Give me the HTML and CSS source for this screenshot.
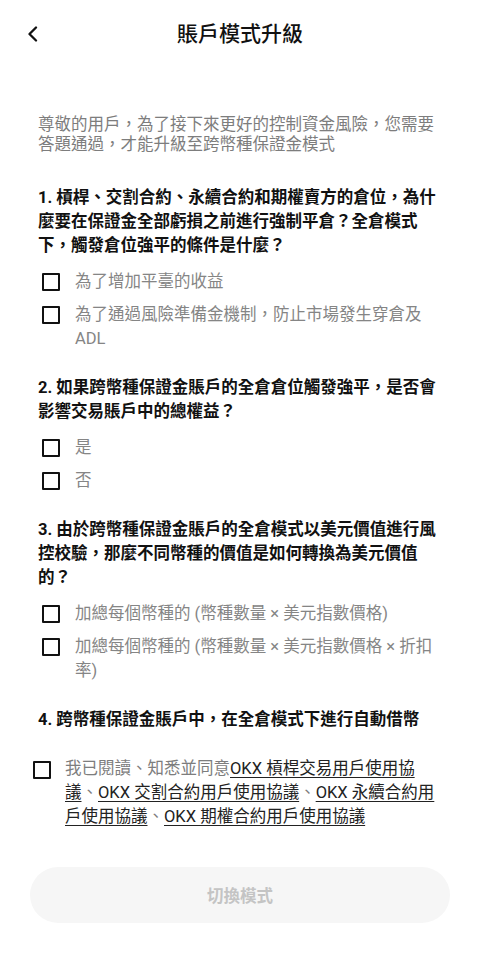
FILE: index.html
```html
<!DOCTYPE html>
<html lang="zh-Hant">
<head>
    <meta charset="UTF-8">
    <meta name="viewport" content="width=device-width, initial-scale=1.0">
    <title>賬戶模式升級</title>
    <link rel="stylesheet" href="styles.css">
</head>
<body>
    <div class="header">
        <button class="back" aria-label="返回">
            <svg width="12" height="16" viewBox="0 0 12 16"><polyline points="9,1.5 2.5,8 9,14.5" fill="none" stroke="#111" stroke-width="2.3" stroke-linecap="round" stroke-linejoin="round"/></svg>
        </button>
        <h1 class="title">賬戶模式升級</h1>
    </div>

    <div class="content">
        <p class="intro">尊敬的用戶，為了接下來更好的控制資金風險，您需要答題通過，才能升級至跨幣種保證金模式</p>

        <div class="quiz">
            <div class="question">
                <h2>1. 槓桿、交割合約、永續合約和期權賣方的倉位，為什麼要在保證金全部虧損之前進行強制平倉？全倉模式下，觸發倉位強平的條件是什麼？</h2>
                <label class="option"><span class="box"></span><span>為了增加平臺的收益</span></label>
                <label class="option"><span class="box"></span><span>為了通過風險準備金機制，防止市場發生穿倉及 ADL</span></label>
            </div>
            <div class="question">
                <h2>2. 如果跨幣種保證金賬戶的全倉倉位觸發強平，是否會影響交易賬戶中的總權益？</h2>
                <label class="option"><span class="box"></span><span>是</span></label>
                <label class="option"><span class="box"></span><span>否</span></label>
            </div>
            <div class="question">
                <h2>3. 由於跨幣種保證金賬戶的全倉模式以美元價值進行風控校驗，那麼不同幣種的價值是如何轉換為美元價值的？</h2>
                <label class="option"><span class="box"></span><span>加總每個幣種的 (幣種數量 × 美元指數價格)</span></label>
                <label class="option"><span class="box"></span><span>加總每個幣種的 (幣種數量 × 美元指數價格 × 折扣率)</span></label>
            </div>
            <div class="question">
                <h2>4. 跨幣種保證金賬戶中，在全倉模式下進行自動借幣</h2>
            </div>
        </div>
    </div>

    <label class="agree">
        <span class="box"></span>
        <span>我已閱讀、知悉並同意<a href="#">OKX 槓桿交易用戶使用協議</a>、<a href="#">OKX 交割合約用戶使用協議</a>、<a href="#">OKX 永續合約用戶使用協議</a>、<a href="#">OKX 期權合約用戶使用協議</a></span>
    </label>

    <div class="footer">
        <button class="switch" disabled>切換模式</button>
    </div>
</body>
</html>
```

FILE: styles.css
```css
*, *:before, *:after {box-sizing: border-box;}
* {margin: 0; padding: 0;}
html, body {background: #fff; color: #111; font-family: "Roboto", "Noto Sans CJK TC", sans-serif; font-size: 16.5px;}
button {font-family: inherit; border: none; background: none;}

.header {position: relative; height: 68px; display: flex; align-items: center; justify-content: center;}
.back {position: absolute; left: 26px; top: 26px; width: 14px; height: 16px; display: flex; align-items: center; justify-content: center; cursor: pointer;}
.title {font-size: 21px; font-weight: 500; color: #111; line-height: 1;}

.content {padding: 47px 38px 0;}
.intro {color: #7d7d7d; line-height: 20px;}

.quiz {display: flex; flex-direction: column; gap: 25px; margin-top: 31px;}
.question {display: flex; flex-direction: column; gap: 9px;}
.question h2 {font-size: 16.5px; font-weight: 700; line-height: 24px; margin-bottom: 3px; color: #111;}

.option {display: flex; gap: 15px; padding-left: 4px; color: #858585; line-height: 24px; cursor: pointer;}
.box {flex: none; width: 18px; height: 18px; margin-top: 3px; border: 2px solid #111; border-radius: 1px;}

.agree {display: flex; gap: 14px; padding: 0 37px 0 33px; margin-top: 22px; color: #7d7d7d; line-height: 24px; cursor: pointer;}
.agree .box {margin-top: 4px;}
.agree a {color: #222; text-decoration: underline; text-underline-offset: 3px; text-decoration-thickness: 1px;}

.footer {padding: 0 30px; margin-top: 38px;}
.switch {display: block; width: 100%; height: 56px; border-radius: 28px; background: #f6f6f6; color: #c4c4c4; font-size: 16.5px; font-weight: 700;}
```
